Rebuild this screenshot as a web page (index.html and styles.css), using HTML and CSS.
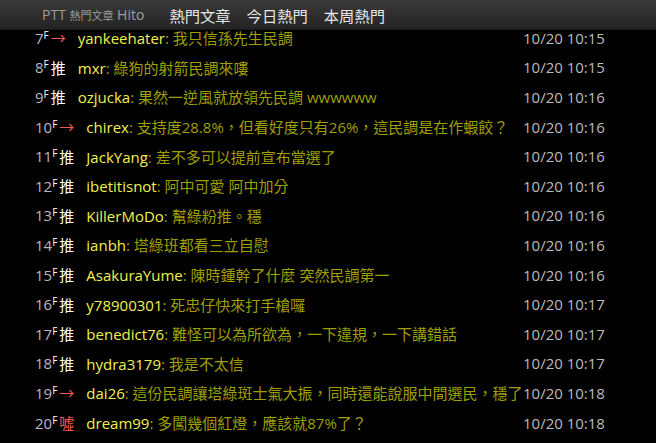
FILE: index.html
```html
<!DOCTYPE html>
<html lang="zh-Hant">
<head>
  <meta charset="UTF-8">
  <title>PTT 熱門文章 Hito</title>
  <link rel="stylesheet" href="styles.css">
</head>
<body>
  <nav class="navbar">
    <span class="brand">PTT <span class="brand-cjk">熱門文章</span> Hito</span>
    <a class="nav-link" href="#">熱門文章</a>
    <a class="nav-link" href="#">今日熱門</a>
    <a class="nav-link" href="#">本周熱門</a>
  </nav>

  <div class="comments">
    <div class="row"><span class="floor">7<sup>F</sup></span><span class="tag arrow">→</span><span class="body"><span class="user">yankeehater</span>: 我只信孫先生民調</span><span class="time">10/20 10:15</span></div>
    <div class="row"><span class="floor">8<sup>F</sup></span><span class="tag push">推</span><span class="body"><span class="user">mxr</span>: 綠狗的射箭民調來嘍</span><span class="time">10/20 10:15</span></div>
    <div class="row"><span class="floor">9<sup>F</sup></span><span class="tag push">推</span><span class="body"><span class="user">ozjucka</span>: 果然一逆風就放領先民調 wwwwww</span><span class="time">10/20 10:16</span></div>
    <div class="row"><span class="floor">10<sup>F</sup></span><span class="tag arrow">→</span><span class="body"><span class="user">chirex</span>: 支持度28.8%，但看好度只有26%，這民調是在作蝦餃？</span><span class="time">10/20 10:16</span></div>
    <div class="row"><span class="floor">11<sup>F</sup></span><span class="tag push">推</span><span class="body"><span class="user">JackYang</span>: 差不多可以提前宣布當選了</span><span class="time">10/20 10:16</span></div>
    <div class="row"><span class="floor">12<sup>F</sup></span><span class="tag push">推</span><span class="body"><span class="user">ibetitisnot</span>: 阿中可愛 阿中加分</span><span class="time">10/20 10:16</span></div>
    <div class="row"><span class="floor">13<sup>F</sup></span><span class="tag push">推</span><span class="body"><span class="user">KillerMoDo</span>: 幫綠粉推。穩</span><span class="time">10/20 10:16</span></div>
    <div class="row"><span class="floor">14<sup>F</sup></span><span class="tag push">推</span><span class="body"><span class="user">ianbh</span>: 塔綠班都看三立自慰</span><span class="time">10/20 10:16</span></div>
    <div class="row"><span class="floor">15<sup>F</sup></span><span class="tag push">推</span><span class="body"><span class="user">AsakuraYume</span>: 陳時鍾幹了什麼 突然民調第一</span><span class="time">10/20 10:16</span></div>
    <div class="row"><span class="floor">16<sup>F</sup></span><span class="tag push">推</span><span class="body"><span class="user">y78900301</span>: 死忠仔快來打手槍囉</span><span class="time">10/20 10:17</span></div>
    <div class="row"><span class="floor">17<sup>F</sup></span><span class="tag push">推</span><span class="body"><span class="user">benedict76</span>: 難怪可以為所欲為，一下違規，一下講錯話</span><span class="time">10/20 10:17</span></div>
    <div class="row"><span class="floor">18<sup>F</sup></span><span class="tag push">推</span><span class="body"><span class="user">hydra3179</span>: 我是不太信</span><span class="time">10/20 10:17</span></div>
    <div class="row"><span class="floor">19<sup>F</sup></span><span class="tag arrow">→</span><span class="body"><span class="user">dai26</span>: 這份民調讓塔綠斑士氣大振，同時還能說服中間選民，穩了</span><span class="time">10/20 10:18</span></div>
    <div class="row"><span class="floor">20<sup>F</sup></span><span class="tag boo">噓</span><span class="body"><span class="user">dream99</span>: 多闖幾個紅燈，應該就87%了？</span><span class="time">10/20 10:18</span></div>
  </div>
</body>
</html>
```

FILE: styles.css
```css
* {
  box-sizing: border-box;
}

body {
  margin: 0;
  background: #000;
  font-family: "Open Sans", "Noto Sans CJK TC", sans-serif;
  font-size: 15px;
  overflow: hidden;
}

.navbar {
  height: 30px;
  display: flex;
  align-items: center;
  padding-left: 42px;
  background: linear-gradient(#3a3a3a, #232323);
  border-bottom: 1px solid #1a1a1a;
}

.brand {
  color: #9d9d9d;
  font-size: 14px;
  margin-right: 25px;
  white-space: nowrap;
}

.brand-cjk {
  font-size: 11px;
}

.nav-link {
  color: #e6e6e6;
  text-decoration: none;
  font-size: 15.3px;
  margin-right: 16px;
  white-space: nowrap;
}

.comments {
  padding: 0 0 0 35px;
}

.row {
  display: flex;
  align-items: center;
  height: 29.6px;
  white-space: nowrap;
}

.row:first-child {
  margin-top: -7px;
}

.floor {
  color: #b4b9c4;
}

.floor sup {
  color: #fff;
  font-size: 10px;
  vertical-align: 5px;
  line-height: 0;
}

.tag {
  display: inline-block;
  width: 15px;
  margin-left: 2px;
  margin-right: 12px;
  text-align: center;
}

.push {
  color: #fff;
}

.arrow,
.boo {
  color: #f55;
}

.body {
  flex: 1;
  color: #9f9f00;
  overflow: hidden;
}

.user {
  color: #f0f050;
}

.time {
  width: 133px;
  flex-shrink: 0;
  color: #bbb;
}
```
